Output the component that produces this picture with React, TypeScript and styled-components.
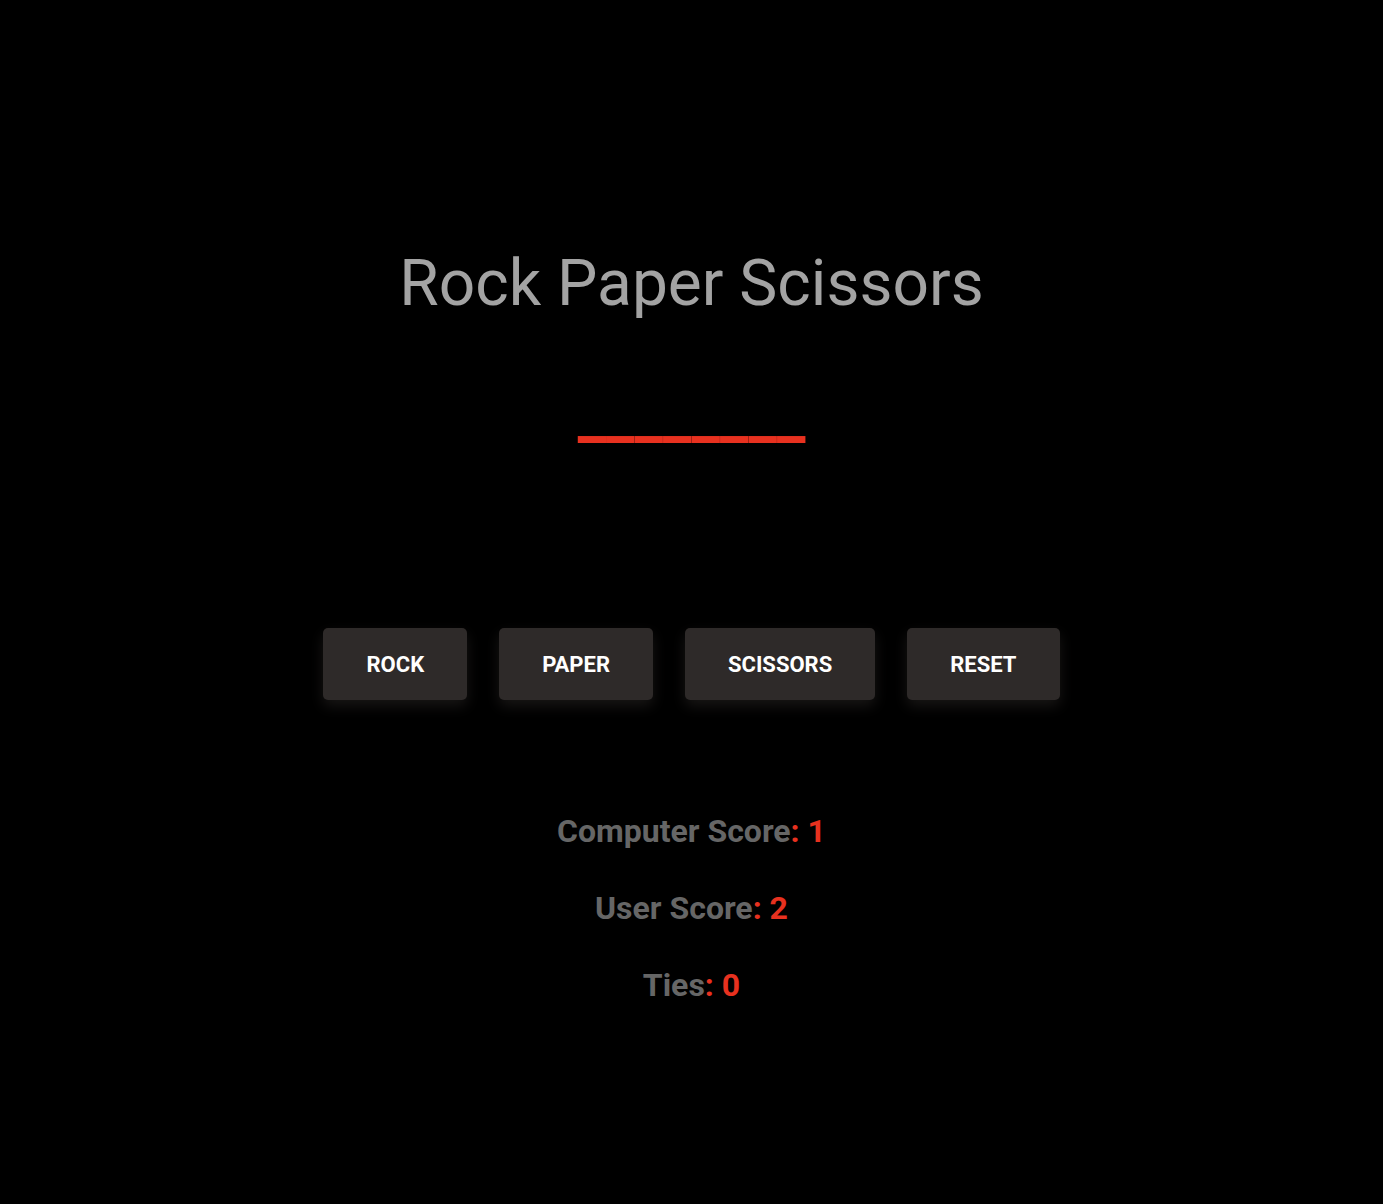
import styled, { createGlobalStyle } from "styled-components";

const GlobalStyle = createGlobalStyle`
  html, body {
    margin: 0;
    padding: 0;
    background: #000;
  }
  body {
    font-family: Roboto, "Liberation Sans", sans-serif;
  }
`;

const choices = ["ROCK", "PAPER", "SCISSORS", "RESET"];

const scores = [
  { label: "Computer Score", value: 1 },
  { label: "User Score", value: 2 },
  { label: "Ties", value: 0 },
];

const App = () => {
  return (
    <>
      <GlobalStyle />
      <Page>
        <Title>Rock Paper Scissors</Title>
        <Result>________</Result>
        <Buttons>
          {choices.map((c) => (
            <Button key={c}>{c}</Button>
          ))}
        </Buttons>
        <Scores>
          {scores.map((s) => (
            <Score key={s.label}>
              {s.label}
              <Red>: {s.value}</Red>
            </Score>
          ))}
        </Scores>
      </Page>
    </>
  );
};

export default App;

const Page = styled.div`
  width: 100%;
  min-height: 1204px;
  background: #000;
  display: flex;
  flex-direction: column;
  align-items: center;
  padding-top: 246px;
  box-sizing: border-box;
`;

const Title = styled.h1`
  margin: 0;
  font-size: 64px;
  font-weight: 400;
  line-height: 75px;
  color: #a3a3a3;
`;

const Result = styled.div`
  margin-top: 56px;
  font-size: 64px;
  font-weight: 700;
  line-height: 75px;
  color: #e8311f;
`;

const Buttons = styled.div`
  display: flex;
  gap: 32px;
  margin-top: 176px;
`;

const Button = styled.button`
  height: 72px;
  padding: 0 43px;
  border: none;
  border-radius: 5px;
  background: #2e2a29;
  color: #fff;
  font-family: Roboto, "Liberation Sans", sans-serif;
  font-size: 22px;
  font-weight: 700;
  box-shadow: 0 6px 14px rgba(40, 36, 35, 0.6);
  cursor: pointer;
`;

const Scores = styled.div`
  display: flex;
  flex-direction: column;
  align-items: center;
  margin-top: 113px;
  gap: 40px;
`;

const Score = styled.div`
  font-size: 32px;
  font-weight: 700;
  line-height: 37px;
  color: #666;
`;

const Red = styled.span`
  color: #e8311f;
`;
